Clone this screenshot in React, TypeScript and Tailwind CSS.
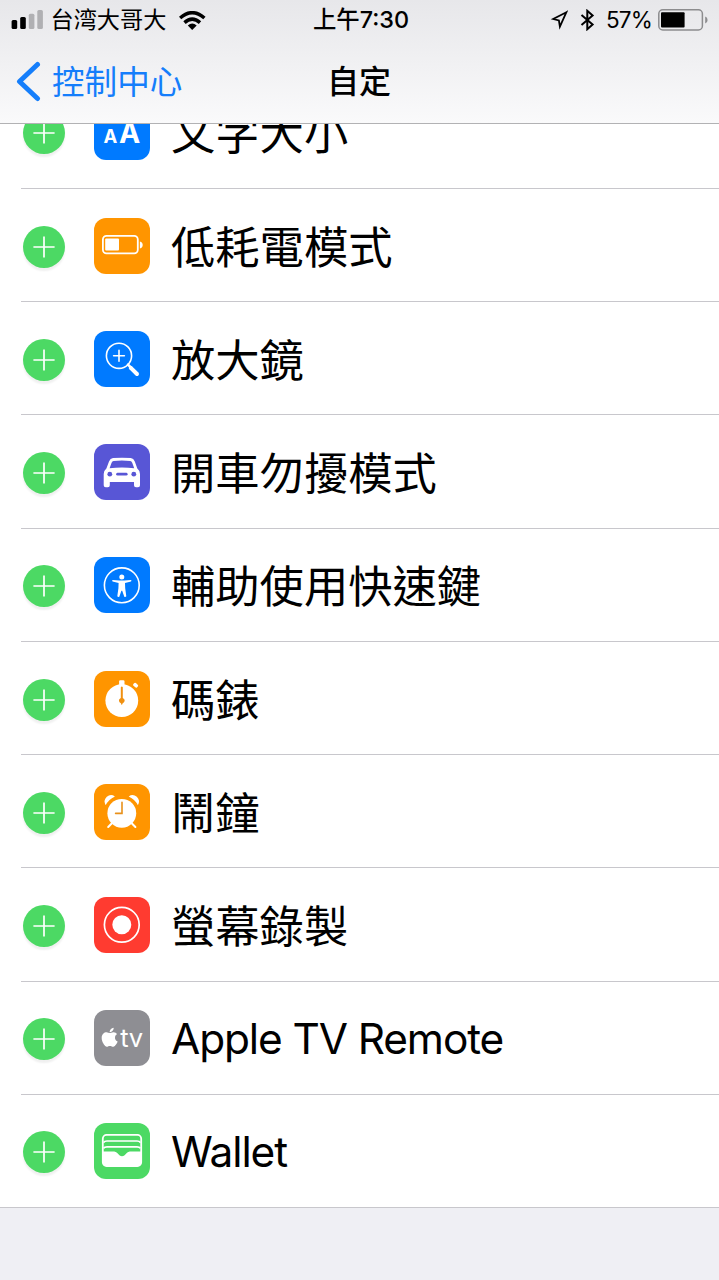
import type { ReactNode } from "react";
import { FaApple } from "react-icons/fa";

type Control = {
  name: string;
  color: string;
  icon: ReactNode;
};

const controls: Control[] = [
  {
    name: "文字大小",
    color: "bg-[#007aff]",
    icon: (
      <g className="fill-white font-bold">
        <text x="9.4" y="39" fontSize="18.5">
          A
        </text>
        <text x="25" y="39" fontSize="28.5">
          A
        </text>
      </g>
    ),
  },
  {
    name: "低耗電模式",
    color: "bg-[#ff9500]",
    icon: (
      <>
        <rect x="8.9" y="17.9" width="34.9" height="17.4" rx="3.6" fill="none" stroke="white" strokeWidth="1.8" />
        <rect x="11.2" y="20.6" width="13.8" height="12" rx="1" fill="white" />
        <path d="M45.9 23.4Q48.7 24 48.7 26.9T45.9 30.4Z" fill="white" />
      </>
    ),
  },
  {
    name: "放大鏡",
    color: "bg-[#007aff]",
    icon: (
      <g stroke="white" fill="none" strokeLinecap="round">
        <circle cx="25" cy="24.8" r="12.6" strokeWidth="1.6" />
        <path d="M25 19.4V30.2M19.6 24.8H30.4" strokeWidth="1.6" />
        <path d="M34 33.6L37 36.6" strokeWidth="2.6" />
        <path d="M36.8 36.8L43 43" strokeWidth="4" />
      </g>
    ),
  },
  {
    name: "開車勿擾模式",
    color: "bg-[#5856d6]",
    icon: (
      <>
        <path
          fill="white"
          fillRule="evenodd"
          d="M19 14.1Q28 13.2 36.8 14.1Q39.6 14.5 40.8 17.5L43.3 24.4Q46 26.5 46 30V41.3Q46 43.3 44 43.3H42Q40 43.3 40 41.3V38H15.8V41.3Q15.8 43.3 13.8 43.3H11.7Q9.7 43.3 9.7 41.3V30Q9.7 26.5 12.4 24.4L15 17.5Q16.2 14.5 19 14.1ZM19.6 17Q18.2 17.2 17.6 18.8L15.6 24.2Q28 23 40.2 24.2L38.2 18.8Q37.6 17.2 36.2 17Q28 16.2 19.6 17Z"
        />
        <g className="fill-[#5856d6]">
          <circle cx="15.8" cy="30.2" r="2.4" />
          <circle cx="39.8" cy="30.2" r="2.4" />
          <rect x="22.2" y="28.8" width="11.4" height="2.8" rx="1.4" />
        </g>
      </>
    ),
  },
  {
    name: "輔助使用快速鍵",
    color: "bg-[#007aff]",
    icon: (
      <>
        <circle cx="27.8" cy="28.3" r="17.4" fill="none" stroke="white" strokeWidth="1.6" />
        <circle cx="27.8" cy="20" r="2.5" fill="white" />
        <path
          fill="white"
          d="M18.6 22.9L25.4 23.5H30.2L37 22.9Q38 23.8 37 24.6L31 25.9L31.2 31.2L32.3 39.3Q31.4 40.4 30.3 39.7L28.2 33.8H27.4L25.3 39.7Q24.2 40.4 23.3 39.3L24.4 31.2L24.6 25.9L18.6 24.6Q17.6 23.8 18.6 22.9Z"
        />
      </>
    ),
  },
  {
    name: "碼錶",
    color: "bg-[#ff9500]",
    icon: (
      <>
        <circle cx="27.8" cy="29.6" r="16.4" fill="white" />
        <rect x="25.1" y="9.2" width="5.4" height="6" rx="1.2" fill="white" />
        <rect x="39.1" y="12.4" width="5" height="3.6" rx="1.3" fill="white" transform="rotate(42 41.6 14.2)" />
        <path
          className="fill-[#f09010]"
          d="M26.8 16.2Q27.8 15 28.8 16.2V26.9Q30.9 27.8 30.7 29.8Q30.4 31.4 28.7 32.3L27.8 34.2L26.9 32.3Q25.2 31.4 24.9 29.8Q24.7 27.8 26.8 26.9Z"
        />
      </>
    ),
  },
  {
    name: "鬧鐘",
    color: "bg-[#ff9500]",
    icon: (
      <>
        <circle cx="27.8" cy="29.3" r="14.4" fill="white" />
        <path fill="white" d="M11.7 21.2Q9 16.4 12.8 12.8Q16.7 9.4 20.9 12.4Q14.5 15.3 11.7 21.2Z" />
        <path fill="white" d="M43.9 21.2Q46.6 16.4 42.8 12.8Q38.9 9.4 34.7 12.4Q41.1 15.3 43.9 21.2Z" />
        <path d="M18.4 38.8L14.2 43M37.2 38.8L41.4 43" stroke="white" strokeWidth="2" strokeLinecap="round" />
        <path d="M28 18.3V29.4H21.6" fill="none" className="stroke-[#e8901a]" strokeWidth="1.6" strokeLinecap="round" />
      </>
    ),
  },
  {
    name: "螢幕錄製",
    color: "bg-[#ff3b30]",
    icon: (
      <>
        <circle cx="27.8" cy="27.8" r="17.4" fill="none" stroke="white" strokeWidth="1.7" />
        <circle cx="27.8" cy="27.8" r="9.5" fill="white" />
      </>
    ),
  },
  {
    name: "Apple TV Remote",
    color: "bg-[#8e8e93]",
    icon: (
      <>
        <FaApple x="4.8" y="16.3" size="21.7" color="white" />
        <text x="26.2" y="36.6" fontSize="25.5" className="fill-white tracking-[-0.4px]">
          tv
        </text>
      </>
    ),
  },
  {
    name: "Wallet",
    color: "bg-[#4cd964]",
    icon: (
      <>
        <rect x="8.8" y="11.9" width="38.4" height="31.2" rx="3.8" fill="none" stroke="white" strokeWidth="1.8" />
        <path
          d="M9.6 19.6Q10.4 18 13 18H43Q45.6 18 46.4 19.6M9.6 25.4Q10.4 23.8 13 23.8H43Q45.6 23.8 46.4 25.4"
          fill="none"
          stroke="white"
          strokeWidth="1.7"
        />
        <path
          fill="white"
          d="M8.8 28.4H20.2Q21.8 28.5 23 29.8L25.4 32.2Q28 34.2 30.6 32.2L33 29.8Q34.2 28.5 35.8 28.4H47.2V39.4Q47.2 43.2 43.4 43.2H12.6Q8.8 43.2 8.8 39.4Z"
        />
      </>
    ),
  },
];

function StatusBar() {
  return (
    <div className="grid grid-cols-[1fr_auto_1fr] items-center h-10 pl-[11px] pr-[10px]">
      <div className="flex items-center">
        <svg className="w-8 h-5" viewBox="0 0 32 20">
          <rect x="0.6" y="10" width="5.6" height="9" rx="1.5" />
          <rect x="9.2" y="7" width="5.6" height="12" rx="1.5" />
          <g className="fill-[#b0b0b3]">
            <rect x="17.8" y="3.7" width="5.6" height="15.3" rx="1.5" />
            <rect x="26.3" y="0" width="5.6" height="19" rx="1.5" />
          </g>
        </svg>
        <span className="ml-[7.5px] text-[23.2px] leading-10">台湾大哥大</span>
        <svg className="ml-[13px] w-[27px] h-[19px]" viewBox="0 0 27 19">
          <g fill="none" stroke="black" strokeWidth="3.5">
            <path d="M1.1 7Q13.2 -3.6 25.4 7" />
            <path d="M5.5 11.6Q13.2 4.6 21 11.6" />
          </g>
          <path d="M8.8 14.5Q13.2 10.6 17.7 14.5L13.2 18.9Z" />
        </svg>
      </div>
      <span className="pl-[2px] text-[23.4px] leading-10 font-medium">上午7:30</span>
      <div className="flex items-center justify-end">
        <svg className="w-[19px] h-[20px]" viewBox="0 0 19 20">
          <path d="M17.4 2.2L4.2 9L9.9 10.5L10.9 16.6Z" fill="none" stroke="black" strokeWidth="1.8" />
        </svg>
        <svg className="ml-[12px] w-[15px] h-[22px]" viewBox="0 0 15 22">
          <path d="M1.5 6L12.6 15.6L7.3 20.2V1.8L12.6 6.4L1.5 16" fill="none" stroke="black" strokeWidth="2" />
        </svg>
        <span className="ml-[11px] text-[22.5px] leading-10 tracking-[-0.8px]">57%</span>
        <svg className="ml-[6px] w-[51px] h-[22px]" viewBox="0 0 51 22">
          <rect x="0.8" y="0.8" width="43.6" height="20.2" rx="4" fill="none" className="stroke-[#8c8c8e]" strokeWidth="1.5" />
          <rect x="3" y="3.3" width="23.6" height="15.2" rx="1" />
          <path className="fill-[#8c8c8e]" d="M47.2 7.6Q49.6 8.3 49.6 11T47.2 14.6Z" />
        </svg>
      </div>
    </div>
  );
}

function NavBar() {
  return (
    <nav className="grid grid-cols-[1fr_auto_1fr] items-center h-[83px] pl-[15px] pr-4">
      <button className="flex items-center text-[#157efb]">
        <svg className="w-[26px] h-[42px]" viewBox="0 0 26 42" fill="none">
          <path d="M22.5 3.5L4.5 20.5L22.5 37.5" stroke="currentColor" strokeWidth="5" strokeLinecap="round" strokeLinejoin="round" />
        </svg>
        <span className="ml-[11px] text-[32.6px] leading-[48px]">控制中心</span>
      </button>
      <h1 className="text-[32px] leading-[48px] font-medium">自定</h1>
    </nav>
  );
}

function AddButton() {
  return (
    <button className="mt-[3px] size-[42px] shrink-0 rounded-full bg-[#4cd964] shadow-[0_3px_2px_#00000010]">
      <svg viewBox="0 0 42 42" stroke="white" strokeWidth="1.7">
        <path d="M21 10.4V31.6M10.4 21H31.6" />
      </svg>
    </button>
  );
}

function ControlRow({ name, color, icon }: Control) {
  return (
    <li className="flex items-center h-[113.22px] ml-[21px] pl-[2px] border-b border-[#c8c7cc] last:ml-0 last:pl-[23px]">
      <AddButton />
      <div className={`mt-px ml-[29px] size-14 shrink-0 rounded-[12px] overflow-hidden ${color}`}>
        <svg viewBox="0 0 56 56">{icon}</svg>
      </div>
      {/* latin names are set tighter than the chinese ones */}
      {/^[A-Z]/.test(name) ? (
        <span className="mt-[2px] ml-[21px] text-[42.4px] leading-[64px] tracking-[-1.1px]">{name}</span>
      ) : (
        <span className="mt-[5px] ml-[21px] text-[44.3px] leading-[64px]">{name}</span>
      )}
    </li>
  );
}

export default function App() {
  return (
    <div className="flex flex-col w-[719px] h-[1280px] overflow-hidden bg-[#efeff4] text-black font-['Inter','Noto_Sans_CJK_TC',sans-serif]">
      <header className="h-[124px] shrink-0 bg-linear-to-b from-[#e7e7ea] to-[#fafafb] border-b border-[#b2b2b4]">
        <StatusBar />
        <NavBar />
      </header>
      <main className="overflow-hidden">
        {/* list is scrolled, so the first row sits partly under the header */}
        <ul className="-mt-[48.2px] bg-white">
          {controls.map((control) => (
            <ControlRow key={control.name} {...control} />
          ))}
        </ul>
      </main>
    </div>
  );
}
